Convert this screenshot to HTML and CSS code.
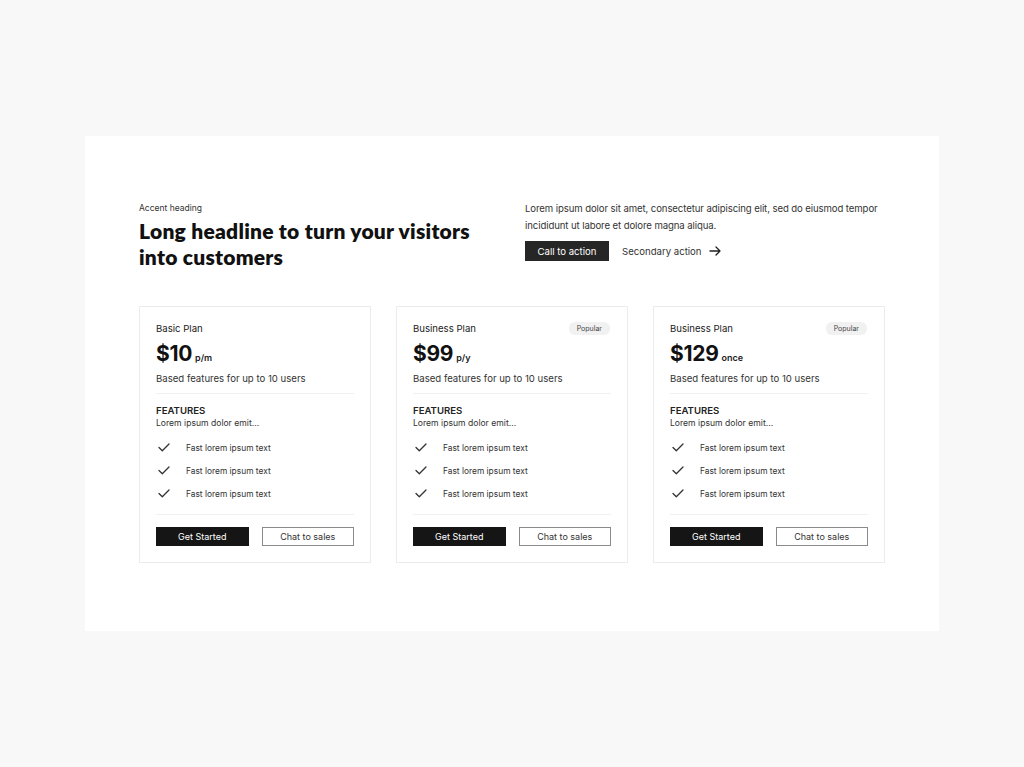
FILE: index.html
```html
<!DOCTYPE html>
<html lang="en">
<head>
<meta charset="utf-8">
<title>Pricing</title>
<link rel="stylesheet" href="styles.css">
</head>
<body>
<main class="section">
  <header class="intro">
    <div class="intro-left">
      <p class="accent">Accent heading</p>
      <h1 class="headline">Long headline to turn your visitors into customers</h1>
    </div>
    <div class="intro-right">
      <p class="lead">Lorem ipsum dolor sit amet, consectetur adipiscing elit, sed do eiusmod tempor incididunt ut labore et dolore magna aliqua.</p>
      <div class="actions">
        <a class="btn-cta">Call to action</a>
        <a class="btn-link">Secondary action
          <svg width="12" height="10" viewBox="0 0 12 10" fill="none" stroke="#222" stroke-width="1.3" stroke-linecap="round" stroke-linejoin="round"><path d="M1 5h10M7 1l4 4-4 4"/></svg>
        </a>
      </div>
    </div>
  </header>

  <section class="cards">
    <article class="card">
      <div class="card-top"><span class="plan">Basic Plan</span></div>
      <div class="price"><span class="amount">$10</span><span class="period">p/m</span></div>
      <p class="desc">Based features for up to 10 users</p>
      <hr class="divider">
      <p class="feat-title">FEATURES</p>
      <p class="feat-sub">Lorem ipsum dolor emit...</p>
      <ul class="feat-list">
        <li><svg class="check" width="12" height="9" viewBox="0 0 12 9" fill="none" stroke="#333" stroke-width="1.3" stroke-linecap="round" stroke-linejoin="round"><path d="M1 4.5l3.3 3.3L11 1"/></svg>Fast lorem ipsum text</li>
        <li><svg class="check" width="12" height="9" viewBox="0 0 12 9" fill="none" stroke="#333" stroke-width="1.3" stroke-linecap="round" stroke-linejoin="round"><path d="M1 4.5l3.3 3.3L11 1"/></svg>Fast lorem ipsum text</li>
        <li><svg class="check" width="12" height="9" viewBox="0 0 12 9" fill="none" stroke="#333" stroke-width="1.3" stroke-linecap="round" stroke-linejoin="round"><path d="M1 4.5l3.3 3.3L11 1"/></svg>Fast lorem ipsum text</li>
      </ul>
      <hr class="divider bottom">
      <div class="card-actions">
        <a class="btn-primary">Get Started</a>
        <a class="btn-outline">Chat to sales</a>
      </div>
    </article>

    <article class="card">
      <div class="card-top"><span class="plan">Business Plan</span><span class="badge">Popular</span></div>
      <div class="price"><span class="amount">$99</span><span class="period">p/y</span></div>
      <p class="desc">Based features for up to 10 users</p>
      <hr class="divider">
      <p class="feat-title">FEATURES</p>
      <p class="feat-sub">Lorem ipsum dolor emit...</p>
      <ul class="feat-list">
        <li><svg class="check" width="12" height="9" viewBox="0 0 12 9" fill="none" stroke="#333" stroke-width="1.3" stroke-linecap="round" stroke-linejoin="round"><path d="M1 4.5l3.3 3.3L11 1"/></svg>Fast lorem ipsum text</li>
        <li><svg class="check" width="12" height="9" viewBox="0 0 12 9" fill="none" stroke="#333" stroke-width="1.3" stroke-linecap="round" stroke-linejoin="round"><path d="M1 4.5l3.3 3.3L11 1"/></svg>Fast lorem ipsum text</li>
        <li><svg class="check" width="12" height="9" viewBox="0 0 12 9" fill="none" stroke="#333" stroke-width="1.3" stroke-linecap="round" stroke-linejoin="round"><path d="M1 4.5l3.3 3.3L11 1"/></svg>Fast lorem ipsum text</li>
      </ul>
      <hr class="divider bottom">
      <div class="card-actions">
        <a class="btn-primary">Get Started</a>
        <a class="btn-outline">Chat to sales</a>
      </div>
    </article>

    <article class="card">
      <div class="card-top"><span class="plan">Business Plan</span><span class="badge">Popular</span></div>
      <div class="price"><span class="amount">$129</span><span class="period">once</span></div>
      <p class="desc">Based features for up to 10 users</p>
      <hr class="divider">
      <p class="feat-title">FEATURES</p>
      <p class="feat-sub">Lorem ipsum dolor emit...</p>
      <ul class="feat-list">
        <li><svg class="check" width="12" height="9" viewBox="0 0 12 9" fill="none" stroke="#333" stroke-width="1.3" stroke-linecap="round" stroke-linejoin="round"><path d="M1 4.5l3.3 3.3L11 1"/></svg>Fast lorem ipsum text</li>
        <li><svg class="check" width="12" height="9" viewBox="0 0 12 9" fill="none" stroke="#333" stroke-width="1.3" stroke-linecap="round" stroke-linejoin="round"><path d="M1 4.5l3.3 3.3L11 1"/></svg>Fast lorem ipsum text</li>
        <li><svg class="check" width="12" height="9" viewBox="0 0 12 9" fill="none" stroke="#333" stroke-width="1.3" stroke-linecap="round" stroke-linejoin="round"><path d="M1 4.5l3.3 3.3L11 1"/></svg>Fast lorem ipsum text</li>
      </ul>
      <hr class="divider bottom">
      <div class="card-actions">
        <a class="btn-primary">Get Started</a>
        <a class="btn-outline">Chat to sales</a>
      </div>
    </article>
  </section>
</main>
</body>
</html>
```
FILE: styles.css
```css
* { box-sizing: border-box; }
html, body { margin: 0; padding: 0; }
body {
  background: #f8f8f8;
  font-family: "Inter", "Liberation Sans", sans-serif;
  color: #222;
  padding-top: 136px;
}
p { margin: 0; }
.section {
  width: 854px;
  margin: 0 auto;
  background: #fff;
  padding: 66px 54px 68px;
}
.intro {
  display: grid;
  grid-template-columns: 386px 1fr;
  margin-bottom: 36px;
}
.accent {
  font-size: 8.5px;
  color: #333;
  line-height: 12px;
  margin-bottom: 4px;
}
.headline {
  margin: 0;
  max-width: 345px;
  font-family: "Lato", "Liberation Sans", sans-serif;
  font-weight: 800;
  font-size: 21px;
  line-height: 26px;
  color: #111;
  letter-spacing: 0.25px;
}
.lead {
  font-size: 9.6px;
  line-height: 17px;
  color: #333;
  margin-top: -2px;
  letter-spacing: -0.1px;
  width: 362px;
}
.actions {
  display: flex;
  align-items: center;
  gap: 13px;
  margin-top: 7px;
}
.btn-cta {
  display: inline-flex;
  align-items: center;
  justify-content: center;
  width: 84px;
  height: 20px;
  background: #262626;
  color: #fff;
  font-size: 9.6px;
}
.btn-link {
  display: inline-flex;
  align-items: center;
  gap: 7px;
  font-size: 9.6px;
  color: #333;
}
.cards {
  display: grid;
  grid-template-columns: repeat(3, 232px);
  gap: 25px;
}
.card {
  border: 1px solid #ececec;
  padding: 15px 16px 16px 16px;
}
.card-top {
  display: flex;
  justify-content: space-between;
  align-items: center;
  height: 12px;
}
.plan {
  font-size: 9.6px;
  color: #222;
}
.badge {
  font-size: 7px;
  background: #f1f1f1;
  border-radius: 6px;
  padding: 2px 8px;
  color: #444;
  margin-right: 1px;
}
.price {
  display: flex;
  align-items: baseline;
  gap: 3px;
  margin-top: 7px;
  height: 25px;
}
.amount {
  font-size: 21px;
  font-weight: 700;
  color: #111;
  letter-spacing: -0.3px;
}
.period {
  font-size: 9px;
  font-weight: 600;
  color: #222;
}
.desc {
  font-size: 9.6px;
  line-height: 13px;
  color: #333;
  margin-top: 6px;
}
.divider {
  border: 0;
  border-top: 1px solid #f0f0f0;
  margin: 8px 0 10px;
}
.divider.bottom { margin: 14px 0 12px; }
.feat-title {
  font-size: 9.6px;
  font-weight: 600;
  line-height: 13px;
  color: #222;
}
.feat-sub {
  font-size: 8.6px;
  line-height: 12px;
  color: #333;
}
.feat-list {
  list-style: none;
  margin: 12px 0 0;
  padding: 0;
  display: flex;
  flex-direction: column;
  gap: 10px;
}
.feat-list li {
  display: flex;
  align-items: center;
  height: 13px;
  font-size: 8.4px;
  color: #333;
}
.check { margin: 0 16px 0 2px; }
.card-actions {
  display: flex;
  gap: 13px;
}
.btn-primary, .btn-outline {
  display: inline-flex;
  align-items: center;
  justify-content: center;
  width: 93px;
  height: 19px;
  font-size: 9px;
}
.btn-primary { background: #151515; color: #fff; }
.btn-outline { border: 1px solid #8a8a8a; color: #333; }
```
